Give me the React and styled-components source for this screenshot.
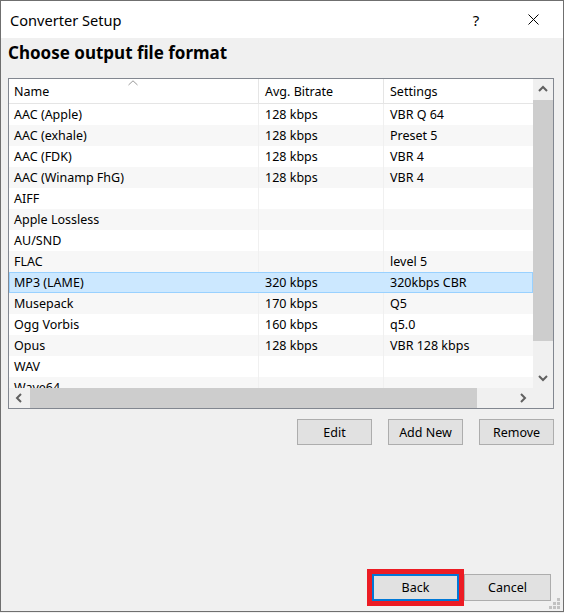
import React from 'react';
import styled, { createGlobalStyle } from 'styled-components';

const GlobalStyle = createGlobalStyle`
    body {
        margin: 0;
        background: #f0f0f0;
        font-family: "Noto Sans", "Open Sans", sans-serif;
    }
`;

const Window = styled.div`
    position: relative;
    box-sizing: border-box;
    width: 564px;
    height: 612px;
    border: 1px solid #6f6f6f;
    background: #f0f0f0;
    display: flex;
    flex-direction: column;
    color: #000;
`;

const TitleBar = styled.div`
    height: 37px;
    background: #fff;
    display: flex;
    align-items: center;
    flex-shrink: 0;
`;

const Title = styled.div`
    flex: 1;
    padding-left: 9px;
    font-size: 14.6px;
`;

const TitleButton = styled.div`
    width: 46px;
    height: 37px;
    margin-right: ${p => p.$mr || 0}px;
    display: flex;
    align-items: center;
    justify-content: center;
    font-size: 15px;
`;

const Content = styled.div`
    flex: 1;
    display: flex;
    flex-direction: column;
    padding: 3px 9px 10px 7px;
`;

const Heading = styled.h1`
    margin: 0 0 13px;
    font-size: 17px;
    font-weight: 700;
    line-height: 24px;
`;

const ListBox = styled.div`
    box-sizing: border-box;
    height: 331px;
    border: 1px solid #828790;
    background: #fff;
    display: grid;
    grid-template-columns: 524px 20px;
    grid-template-rows: 309px 20px;
`;

const Viewport = styled.div`
    overflow: hidden;
    font-size: 12.5px;
`;

const Row = styled.div`
    box-sizing: border-box;
    display: flex;
    height: ${p => (p.$header ? 25 : 21)}px;
    background: ${p => (p.$selected ? '#cce8ff' : p.$alt ? '#f7f7f7' : '#fff')};
    border: ${p => (p.$selected ? '1px solid #99d1ff' : 'none')};
    border-bottom: ${p => (p.$header ? '1px solid #e5e5e5' : p.$selected ? '1px solid #99d1ff' : 'none')};
`;

const Cell = styled.div`
    position: relative;
    box-sizing: border-box;
    width: ${p => p.$width}px;
    flex-shrink: 0;
    padding-left: ${p => p.$pad}px;
    border-right: ${p => (p.$last ? 'none' : `1px solid ${p.$header ? '#e5e5e5' : p.$selected ? 'transparent' : '#f0f0f0'}`)};
    display: flex;
    align-items: center;
    white-space: nowrap;
    overflow: hidden;
`;

const SortArrow = styled.svg`
    position: absolute;
    left: 119px;
    top: 1px;
`;

const VScroll = styled.div`
    background: #f0f0f0;
    display: flex;
    flex-direction: column;
`;

const HScroll = styled.div`
    background: #f0f0f0;
    display: flex;
`;

const Arrow = styled.div`
    width: 20px;
    height: 20px;
    flex-shrink: 0;
    display: flex;
    align-items: center;
    justify-content: center;
`;

const Track = styled.div`
    flex: 1;
    position: relative;
`;

const Thumb = styled.div`
    position: absolute;
    background: #cdcdcd;
    ${p => (p.$vertical ? 'left: 0; right: 0;' : 'top: 0; bottom: 0;')}
`;

const Corner = styled.div`
    background: #f0f0f0;
`;

const ButtonRow = styled.div`
    display: flex;
    justify-content: flex-end;
    gap: 16px;
    margin-top: 10px;
`;

const Footer = styled.div`
    margin-top: auto;
    display: flex;
    justify-content: flex-end;
    gap: 5px;
    padding-right: 3px;
`;

const Button = styled.button`
    box-sizing: border-box;
    width: ${p => p.$width || 75}px;
    height: ${p => p.$height || 26}px;
    padding: 0;
    background: #e1e1e1;
    border: ${p => (p.$default ? '2px solid #0078d7' : '1px solid #adadad')};
    outline: ${p => (p.$highlight ? '5px solid #ec1c24' : 'none')};
    font-family: inherit;
    font-size: 12.5px;
    color: #000;
`;

const Grip = styled.svg`
    position: absolute;
    right: 3px;
    bottom: 2px;
`;

const columns = [
    { title: 'Name', width: 250, pad: 5 },
    { title: 'Avg. Bitrate', width: 125, pad: 6 },
    { title: 'Settings', width: 149, pad: 6 },
];

const formats = [
    ['AAC (Apple)', '128 kbps', 'VBR Q 64'],
    ['AAC (exhale)', '128 kbps', 'Preset 5'],
    ['AAC (FDK)', '128 kbps', 'VBR 4'],
    ['AAC (Winamp FhG)', '128 kbps', 'VBR 4'],
    ['AIFF', '', ''],
    ['Apple Lossless', '', ''],
    ['AU/SND', '', ''],
    ['FLAC', '', 'level 5'],
    ['MP3 (LAME)', '320 kbps', '320kbps CBR'],
    ['Musepack', '170 kbps', 'Q5'],
    ['Ogg Vorbis', '160 kbps', 'q5.0'],
    ['Opus', '128 kbps', 'VBR 128 kbps'],
    ['WAV', '', ''],
    ['Wave64', '', ''],
];

const selectedIndex = 8;

const Chevron = ({ dir }) => {
    const pts = {
        up: '1,6 5,2 9,6',
        down: '1,2 5,6 9,2',
        left: '6,1 2,5 6,9',
        right: '2,1 6,5 2,9',
    }[dir];
    const vertical = dir === 'up' || dir === 'down';
    return (
        <svg width={vertical ? 10 : 8} height={vertical ? 8 : 10}>
            <polyline points={pts} fill="none" stroke="#606060" strokeWidth="2" />
        </svg>
    );
};

function App() {
    return (
        <>
            <GlobalStyle />
            <Window>
                <TitleBar>
                    <Title>Converter Setup</Title>
                    <TitleButton $mr={11}>?</TitleButton>
                    <TitleButton $mr={7}>
                        <svg width="11" height="11">
                            <path d="M0.5 0.5 L10.5 10.5 M10.5 0.5 L0.5 10.5" stroke="#000" strokeWidth="1" />
                        </svg>
                    </TitleButton>
                </TitleBar>
                <Content>
                    <Heading>Choose output file format</Heading>
                    <ListBox>
                        <Viewport>
                            <Row $header>
                                {columns.map((c, i) => (
                                    <Cell key={c.title} $header $width={c.width} $pad={c.pad} $last={i === 2}>
                                        {c.title}
                                        {i === 0 && (
                                            <SortArrow width="10" height="6">
                                                <polyline points="0.5,5 5,0.8 9.5,5" fill="none" stroke="#999" strokeWidth="1" />
                                            </SortArrow>
                                        )}
                                    </Cell>
                                ))}
                            </Row>
                            {formats.map((f, r) => (
                                <Row key={f[0]} $alt={r % 2 === 1} $selected={r === selectedIndex}>
                                    {f.map((text, i) => (
                                        <Cell
                                            key={i}
                                            $width={columns[i].width - (r === selectedIndex && i === 0 ? 1 : 0)}
                                            $pad={columns[i].pad - (r === selectedIndex && i === 0 ? 1 : 0)}
                                            $last={i === 2}
                                            $selected={r === selectedIndex}
                                        >
                                            {text}
                                        </Cell>
                                    ))}
                                </Row>
                            ))}
                        </Viewport>
                        <VScroll>
                            <Arrow><Chevron dir="up" /></Arrow>
                            <Track>
                                <Thumb $vertical style={{ top: 1, height: 241 }} />
                            </Track>
                            <Arrow><Chevron dir="down" /></Arrow>
                        </VScroll>
                        <HScroll>
                            <Arrow><Chevron dir="left" /></Arrow>
                            <Track>
                                <Thumb style={{ left: 1, width: 447 }} />
                            </Track>
                            <Arrow><Chevron dir="right" /></Arrow>
                        </HScroll>
                        <Corner />
                    </ListBox>
                    <ButtonRow>
                        <Button>Edit</Button>
                        <Button>Add New</Button>
                        <Button>Remove</Button>
                    </ButtonRow>
                    <Footer>
                        <Button $width={87} $height={27} $default $highlight>Back</Button>
                        <Button $width={87} $height={27}>Cancel</Button>
                    </Footer>
                </Content>
                <Grip width="11" height="11">
                    {[[8, 0], [4, 4], [8, 4], [0, 8], [4, 8], [8, 8]].map(([x, y]) => (
                        <rect key={`${x}-${y}`} x={x} y={y} width="3" height="3" fill="#c2c2c2" />
                    ))}
                </Grip>
            </Window>
        </>
    );
}

export default App;
